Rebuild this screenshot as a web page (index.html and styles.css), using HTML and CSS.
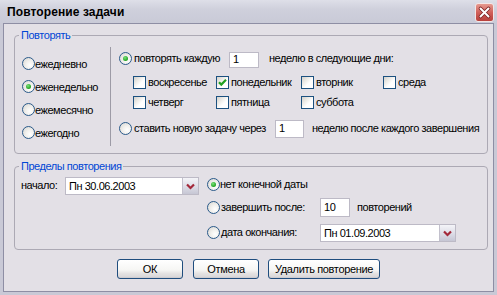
FILE: index.html
```html
<!DOCTYPE html>
<html lang="ru">
<head>
<meta charset="utf-8">
<title>Повторение задачи</title>
<link rel="stylesheet" href="styles.css">
</head>
<body>
<div class="window">
  <div class="titlebar">
    <span class="title">Повторение задачи</span>
    <span class="close">
      <svg width="19" height="19" viewBox="0 0 19 19">
        <path d="M5.5 5.5 L13.5 13.5 M13.5 5.5 L5.5 13.5" stroke="#7a2020" stroke-width="3.6" stroke-linecap="round"/>
        <path d="M5.5 5.5 L13.5 13.5 M13.5 5.5 L5.5 13.5" stroke="#ffffff" stroke-width="2" stroke-linecap="round"/>
      </svg>
    </span>
  </div>
  <div class="client">
    <fieldset class="group g1">
      <legend>Повторять</legend>
      <div class="g1-body">
        <div class="freq">
          <div class="opt"><span class="radio"></span><span>ежедневно</span></div>
          <div class="opt"><span class="radio on"></span><span>еженедельно</span></div>
          <div class="opt"><span class="radio"></span><span>ежемесячно</span></div>
          <div class="opt"><span class="radio"></span><span>ежегодно</span></div>
        </div>
        <div class="detail">
          <div class="row row-a">
            <span class="radio on"></span>
            <span class="lbl-a">повторять каждую</span>
            <span class="field field-a">1</span>
            <span class="tail-a">неделю в следующие дни:</span>
          </div>
          <div class="days">
            <div class="day"><span class="check"></span><span>воскресенье</span></div>
            <div class="day"><span class="check on"><svg width="11" height="11" viewBox="0 0 11 11"><path d="M2 5.2 L4.3 7.6 L9 2.8" fill="none" stroke="#21a121" stroke-width="2.2"/></svg></span><span>понедельник</span></div>
            <div class="day"><span class="check"></span><span>вторник</span></div>
            <div class="day"><span class="check"></span><span>среда</span></div>
            <div class="day"><span class="check"></span><span>четверг</span></div>
            <div class="day"><span class="check"></span><span>пятница</span></div>
            <div class="day"><span class="check"></span><span>суббота</span></div>
          </div>
          <div class="row row-b">
            <span class="radio"></span>
            <span class="lbl-b">ставить новую задачу через</span>
            <span class="field field-b">1</span>
            <span class="tail-b">неделю после каждого завершения</span>
          </div>
        </div>
      </div>
    </fieldset>

    <fieldset class="group g2">
      <legend>Пределы повторения</legend>
      <div class="g2-body">
        <div class="start">
          <span class="start-lbl">начало:</span>
          <span class="combo combo-1">
            <span class="combo-val">Пн 30.06.2003</span>
            <span class="combo-btn"><svg width="15" height="16" viewBox="0 0 15 16"><path d="M4 6.5 L7.5 10 L11 6.5" fill="none" stroke="#a3283a" stroke-width="2.2"/></svg></span>
          </span>
        </div>
        <div class="ends">
          <div class="erow erow-1"><span class="radio on"></span><span>нет конечной даты</span></div>
          <div class="erow erow-2"><span class="radio"></span><span class="elbl">завершить после:</span><span class="field field-10">10</span><span class="after">повторений</span></div>
          <div class="erow erow-3"><span class="radio"></span><span class="elbl">дата окончания:</span>
            <span class="combo combo-2">
              <span class="combo-val">Пн 01.09.2003</span>
              <span class="combo-btn"><svg width="15" height="16" viewBox="0 0 15 16"><path d="M4 6.5 L7.5 10 L11 6.5" fill="none" stroke="#a3283a" stroke-width="2.2"/></svg></span>
            </span>
          </div>
        </div>
      </div>
    </fieldset>

    <div class="buttons">
      <button class="btn btn-ok">ОК</button>
      <button class="btn btn-cancel">Отмена</button>
      <button class="btn btn-del">Удалить повторение</button>
    </div>
  </div>
</div>
</body>
</html>
```

FILE: styles.css
```css
* { box-sizing: border-box; }
html, body { margin: 0; padding: 0; }
body {
  width: 497px;
  height: 295px;
  overflow: hidden;
  background: #e3e0e6;
  font-family: "Liberation Sans", Arial, sans-serif;
  font-size: 11px;
  letter-spacing: -0.45px;
  color: #000;
}
.window {
  width: 497px;
  height: 295px;
  display: flex;
  flex-direction: column;
}
.titlebar {
  height: 23px;
  flex: none;
  display: flex;
  align-items: center;
  justify-content: space-between;
  padding-left: 7px;
  background: linear-gradient(#dedfe8 0%, #cfd0dc 40%, #c9cad7 100%);
}
.title {
  font-weight: bold;
  font-size: 12px;
  letter-spacing: 0.1px;
  padding-top: 1px;
}
.close {
  width: 19px;
  height: 19px;
  margin-right: 3px;
  margin-top: 2px;
  border-radius: 3px;
  border: 1px solid #f3e6e6;
  background: linear-gradient(#e69a90 0%, #d0605a 50%, #b8403c 100%);
  display: flex;
  align-items: center;
  justify-content: center;
}
.close svg { display: block; margin: -1px; }
.client {
  flex: 1;
  display: flex;
  flex-direction: column;
  border-left: 3px solid #c9c9d6;
  border-right: 3px solid #c9c9d6;
  border-bottom: 3px solid #c9c9d6;
  box-shadow: inset 1px 1px 0 #8e8ea4, inset -1px -1px 0 #8e8ea4;
  padding: 6px 6px 0 11px;
}
.group {
  margin: 0;
  border: 1px solid #aca9b4;
  border-radius: 4px;
  padding: 0;
  min-width: 0;
}
.group legend {
  color: #0046d5;
  padding: 0 2px;
  margin-left: 4px;
  line-height: 13px;
  height: 13px;
}
.g1 { padding: 5px 0 7px 0; }
.g2 { margin-top: 6px; padding: 1px 0 5px 0; }

/* group 1 */
.g1-body { display: flex; height: 99px; }
.freq {
  width: 96px;
  border-right: 1px solid #9d9ba6;
  padding: 5px 0 0 7px;
}
.opt { height: 23px; display: flex; align-items: center; }
.opt .radio { margin-right: 0; }

.radio {
  width: 13px;
  height: 13px;
  flex: none;
  border-radius: 50%;
  border: 1px solid #2a5a8a;
  background: radial-gradient(circle at 65% 65%, #ffffff 0%, #f2f1ee 40%, #d6d4cf 100%);
  display: inline-flex;
  align-items: center;
  justify-content: center;
  margin-right: 1px;
}
.radio.on::after {
  content: "";
  width: 5px;
  height: 5px;
  border-radius: 50%;
  background: radial-gradient(circle at 40% 35%, #7ae37a 0%, #21a121 70%, #1b7f1b 100%);
}
.check {
  width: 13px;
  height: 13px;
  flex: none;
  border: 1px solid #1c5180;
  background: linear-gradient(135deg, #d3d1cb 0%, #eeede9 35%, #ffffff 60%);
  display: inline-flex;
  align-items: center;
  justify-content: center;
  margin-right: 2px;
}
.check svg { display: block; }

.detail { flex: 1; padding-left: 8px; }
.row { display: flex; align-items: center; }
.row-a { height: 22px; }
.lbl-a { margin-left: 1px; }
.field {
  background: #fff;
  border: 1px solid #bdbac6;
  padding-left: 3px;
  display: inline-flex;
  align-items: center;
  line-height: 13px;
}
.field-a { width: 30px; height: 16px; margin-left: 9px; margin-top: 3px; }
.tail-a { margin-left: 10px; }
.days {
  margin-top: 3px;
  padding-left: 14px;
  display: grid;
  grid-template-columns: 83px 85px 82px auto;
  grid-auto-rows: 20px;
}
.day { display: flex; align-items: center; }
.row-b { height: 22px; margin-top: 5px; }
.lbl-b { margin-left: 1px; }
.field-b { width: 29px; height: 18px; margin-left: 9px; margin-top: 1px; }
.tail-b { margin-left: 8px; }

/* group 2 */
.g2-body { display: flex; height: 70px; }
.start {
  width: 192px;
  height: 22px;
  padding-left: 6px;
  display: flex;
  align-items: center;
}
.start-lbl { width: 44px; flex: none; }
.combo {
  height: 18px;
  background: #fff;
  border: 1px solid #bdbac6;
  display: flex;
  align-items: stretch;
}
.combo-val { flex: 1; padding-left: 3px; display: flex; align-items: center; }
.combo-btn {
  width: 16px;
  flex: none;
  background: linear-gradient(#f4f4f8 0%, #dcdce6 55%, #c6c6d4 100%);
  border-left: 1px solid #c2c0cc;
  display: flex;
  align-items: center;
  justify-content: center;
}
.combo-btn svg { display: block; }
.combo-1 { width: 134px; margin-top: 2px; }
.ends { flex: 1; }
.erow { display: flex; align-items: center; }
.erow .radio { margin-right: 0; }
.erow-1 { height: 20px; }
.erow-2 { height: 24px; margin-top: 1px; }
.erow-3 { height: 24px; margin-top: 1px; }
.elbl { width: 100px; flex: none; padding-left: 1px; }
.field-10 { width: 30px; height: 19px; }
.after { margin-left: 7px; }
.combo-2 { width: 136px; height: 18px; margin-top: 1px; }

/* buttons */
.buttons {
  margin-top: 9px;
  padding-right: 5px;
  display: flex;
  justify-content: center;
}
.btn {
  font-family: "Liberation Sans", Arial, sans-serif;
  font-size: 11px;
  letter-spacing: -0.35px;
  color: #000;
  height: 20px;
  padding: 0;
  border: 1px solid #1f4d7e;
  border-radius: 3px;
  background: linear-gradient(#ffffff 0%, #f6f6f4 55%, #e4e2e2 75%, #d6d4d6 100%);
  box-shadow: inset 0 -1px 0 #cfccd0;
}
.btn-ok { width: 66px; }
.btn-cancel { width: 66px; margin-left: 10px; }
.btn-del { width: 112px; margin-left: 9px; }
```
